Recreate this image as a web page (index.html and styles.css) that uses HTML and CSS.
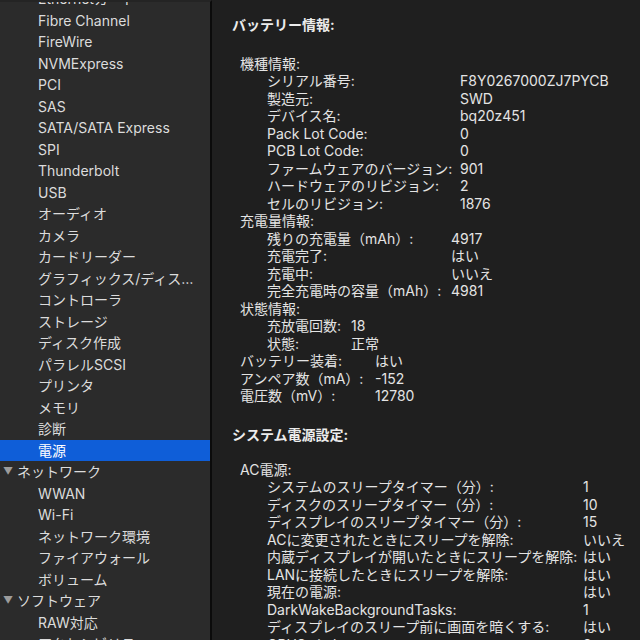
FILE: index.html
```html
<!DOCTYPE html>
<html lang="ja">
<head>
<meta charset="utf-8">
<title>システム情報 - 電源</title>
<link rel="stylesheet" href="styles.css">
</head>
<body>
<div class="app">
  <nav class="sidebar">
    <ul class="tree">
      <li class="item">Ethernetカード</li>
      <li class="item">Fibre Channel</li>
      <li class="item">FireWire</li>
      <li class="item">NVMExpress</li>
      <li class="item">PCI</li>
      <li class="item">SAS</li>
      <li class="item">SATA/SATA Express</li>
      <li class="item">SPI</li>
      <li class="item">Thunderbolt</li>
      <li class="item">USB</li>
      <li class="item">オーディオ</li>
      <li class="item">カメラ</li>
      <li class="item">カードリーダー</li>
      <li class="item">グラフィックス/ディス…</li>
      <li class="item">コントローラ</li>
      <li class="item">ストレージ</li>
      <li class="item">ディスク作成</li>
      <li class="item">パラレルSCSI</li>
      <li class="item">プリンタ</li>
      <li class="item">メモリ</li>
      <li class="item">診断</li>
      <li class="item selected">電源</li>
      <li class="group"><span class="tri">▼</span>ネットワーク</li>
      <li class="item">WWAN</li>
      <li class="item">Wi-Fi</li>
      <li class="item">ネットワーク環境</li>
      <li class="item">ファイアウォール</li>
      <li class="item">ボリューム</li>
      <li class="group"><span class="tri">▼</span>ソフトウェア</li>
      <li class="item">RAW対応</li>
      <li class="item">アクセシビリティ</li>
    </ul>
  </nav>
  <main class="content">
    <section class="section">
      <h2 class="title title-first">バッテリー情報:</h2>
      <div class="label">機種情報:</div>
      <div class="kv kv-model">
        <span>シリアル番号:</span><span>F8Y0267000ZJ7PYCB</span>
        <span>製造元:</span><span>SWD</span>
        <span>デバイス名:</span><span>bq20z451</span>
        <span>Pack Lot Code:</span><span>0</span>
        <span>PCB Lot Code:</span><span>0</span>
        <span>ファームウェアのバージョン:</span><span>901</span>
        <span>ハードウェアのリビジョン:</span><span>2</span>
        <span>セルのリビジョン:</span><span>1876</span>
      </div>
      <div class="label">充電量情報:</div>
      <div class="kv kv-charge">
        <span>残りの充電量（mAh）:</span><span>4917</span>
        <span>充電完了:</span><span>はい</span>
        <span>充電中:</span><span>いいえ</span>
        <span>完全充電時の容量（mAh）:</span><span>4981</span>
      </div>
      <div class="label">状態情報:</div>
      <div class="kv kv-state">
        <span>充放電回数:</span><span>18</span>
        <span>状態:</span><span>正常</span>
      </div>
      <div class="kv kv-top">
        <span>バッテリー装着:</span><span>はい</span>
        <span>アンペア数（mA）:</span><span>-152</span>
        <span>電圧数（mV）:</span><span>12780</span>
      </div>
    </section>
    <section class="section section-next">
      <h2 class="title">システム電源設定:</h2>
      <div class="label">AC電源:</div>
      <div class="kv kv-ac">
        <span>システムのスリープタイマー（分）:</span><span>1</span>
        <span>ディスクのスリープタイマー（分）:</span><span>10</span>
        <span>ディスプレイのスリープタイマー（分）:</span><span>15</span>
        <span>ACに変更されたときにスリープを解除:</span><span>いいえ</span>
        <span>内蔵ディスプレイが開いたときにスリープを解除:</span><span>はい</span>
        <span>LANに接続したときにスリープを解除:</span><span>はい</span>
        <span>現在の電源:</span><span>はい</span>
        <span>DarkWakeBackgroundTasks:</span><span>1</span>
        <span>ディスプレイのスリープ前に画面を暗くする:</span><span>はい</span>
        <span>GPUSwitch:</span><span>2</span>
      </div>
    </section>
  </main>
</div>
</body>
</html>
```
FILE: styles.css
```css
html, body {
  margin: 0;
  padding: 0;
  background: #1f1f1f;
}

body {
  font-family: Inter, "Noto Sans CJK JP", sans-serif;
  font-size: 14px;
  color: #e4e4e4;
}

.app {
  display: flex;
  width: 640px;
  height: 640px;
  overflow: hidden;
}

.sidebar {
  flex: 0 0 210px;
  background: #2b2b2b;
  border-top: 2px solid #242424;
  border-right: 2px solid #0b0b0b;
  overflow: hidden;
}

.tree {
  list-style: none;
  margin: -13.75px 0 0 0;
  padding: 0;
}

.tree li {
  height: 21.5px;
  line-height: 21.5px;
  white-space: nowrap;
  color: #dcdcdc;
}

.item {
  padding-left: 38px;
}

.group {
  display: flex;
  align-items: center;
  padding-left: 3px;
}

.tri {
  display: inline-block;
  width: 14px;
  font-size: 10px;
  color: #9c9c9c;
}

.tree .selected {
  background: #0f5ed8;
  color: #ffffff;
}

.content {
  flex: 1 1 auto;
  padding: 16px 0 0 20px;
  line-height: 17.5px;
  white-space: nowrap;
  overflow: hidden;
}

.title {
  margin: 0 0 17.5px 0;
  font-size: 14px;
  font-weight: 700;
  line-height: 17.5px;
  color: #ececec;
}

.title-first {
  margin-bottom: 21px;
}

.section-next {
  margin-top: 21px;
}

.label {
  padding-left: 8px;
}

.kv {
  display: grid;
  padding-left: 35px;
}

.kv-model { grid-template-columns: 193px auto; }
.kv-charge { grid-template-columns: 184px auto; }
.kv-state { grid-template-columns: 84px auto; }
.kv-top { grid-template-columns: 135px auto; padding-left: 8px; }
.kv-ac { grid-template-columns: 316px auto; }
```
